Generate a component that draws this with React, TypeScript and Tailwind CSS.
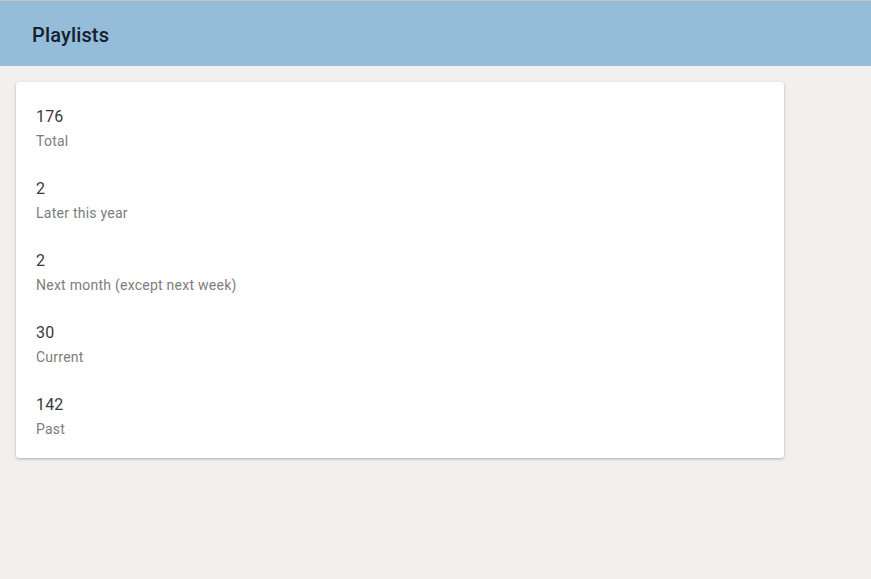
import React from "react"

const stats = [
   { value: "176", label: "Total" },
   { value: "2", label: "Later this year" },
   { value: "2", label: "Next month (except next week)" },
   { value: "30", label: "Current" },
   { value: "142", label: "Past" },
]

function App() {
   return (
      <div className="min-h-[579px] bg-[#f1f0ee] font-['Roboto',sans-serif]">
         <Header/>
         <div className="px-4 pt-4">
            <div className="w-[768px] rounded-[3px] bg-white py-2 shadow-[0_1px_3px_rgba(0,0,0,0.28)]">
               {stats.map((s, i) => (
                  <StatRow key={i} value={s.value} label={s.label}/>
               ))}
            </div>
         </div>
      </div>
   )
}

export default App


function Header() {
   return <header className="h-[66px] border-t border-[#c4c4c4] bg-[#95bcd9] flex items-center px-8 pt-[2px]">
      <h1 className="text-[20px] font-medium tracking-[0.15px] text-[#14202e] leading-none">Playlists</h1>
   </header>
}

function StatRow({ value, label }: { value: string, label: string }) {
   return <div className="px-5 pt-[15px] pb-[11px]">
      <div className="text-[16px] leading-6 tracking-[0.15px] text-[#3a3a3a]">{value}</div>
      <div className="mt-[2px] text-[14px] leading-5 tracking-[0.25px] text-[#7d7d7d]">{label}</div>
   </div>
}
